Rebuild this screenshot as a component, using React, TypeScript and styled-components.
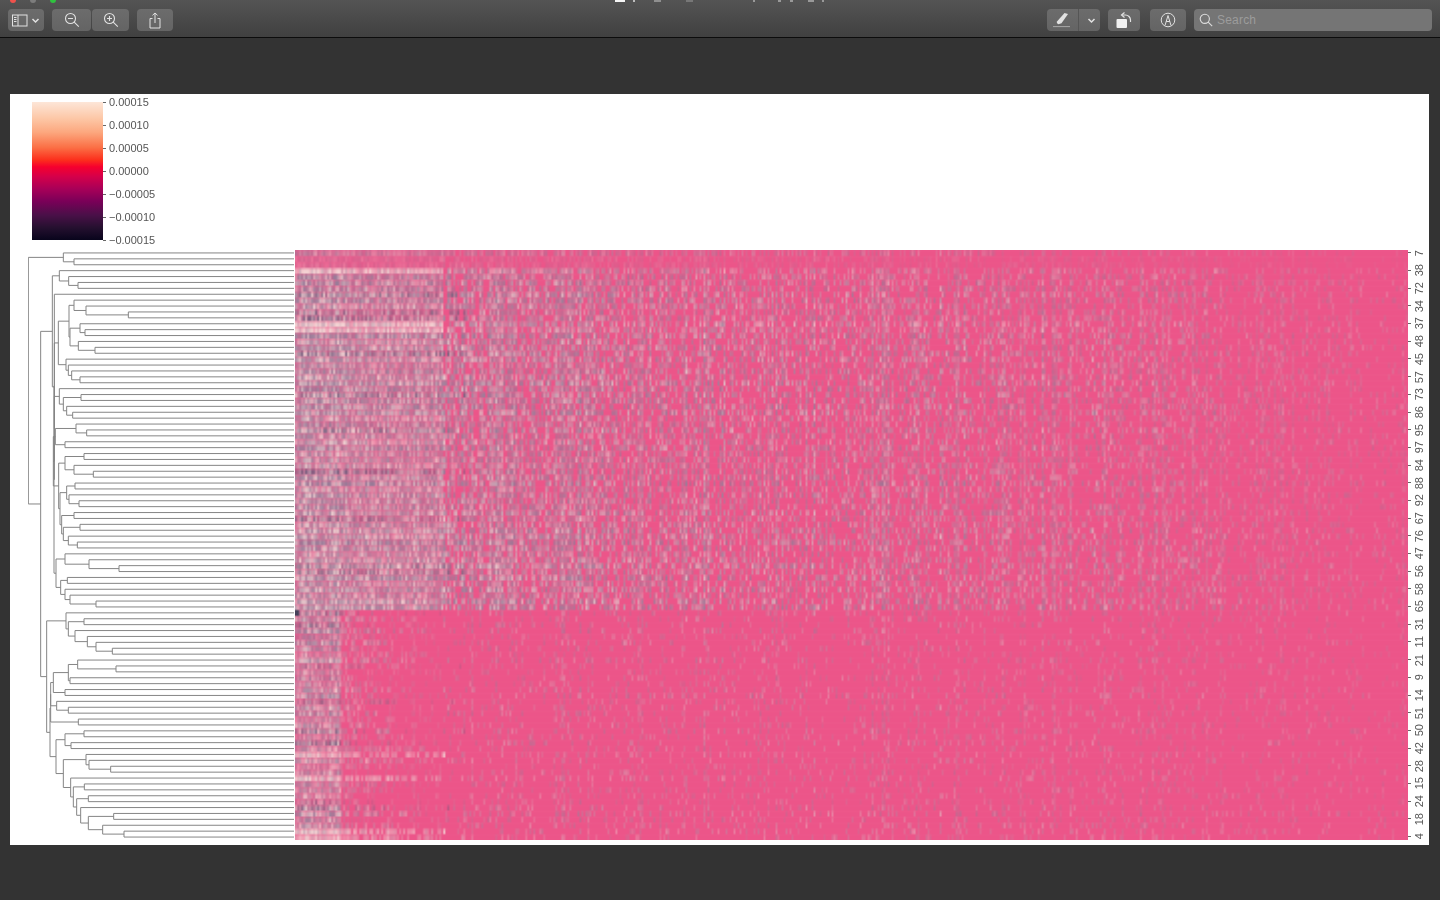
import React, { useEffect, useRef } from "react";
import styled, { createGlobalStyle } from "styled-components";

const GlobalStyle = createGlobalStyle`
  html, body {
    margin: 0;
    height: 100%;
    background: #333333;
    font-family: "Liberation Sans", Arial, sans-serif;
    overflow: hidden;
  }
`;

const Window = styled.div`
  width: 1440px;
  height: 900px;
  background: #333333;
`;

const TitleBar = styled.header`
  height: 37px;
  box-sizing: border-box;
  background: linear-gradient(#545454, #404040);
`;

const Sliver = styled.div`
  height: 3px;
  overflow: hidden;
  display: flex;
  align-items: flex-start;
`;

const Lights = styled.div`
  display: flex;
  gap: 14px;
  margin: -3px 0 0 10px;
`;

const Light = styled.span<{ $c: string }>`
  width: 6px;
  height: 6px;
  border-radius: 50%;
  background: ${(p) => p.$c};
`;

const TitleBits = styled.div`
  display: flex;
  margin-left: 559px;
`;

const TitleBit = styled.span<{ $w: number; $ml: number; $c: string }>`
  width: ${(p) => p.$w}px;
  margin-left: ${(p) => p.$ml}px;
  height: 2px;
  background: ${(p) => p.$c};
`;

const Tools = styled.div`
  display: flex;
  align-items: center;
  padding: 6px 8px 0;
  height: 22px;
`;

const Btn = styled.div<{ $w: number; $ml?: number }>`
  width: ${(p) => p.$w}px;
  height: 22px;
  margin-left: ${(p) => p.$ml ?? 0}px;
  flex: none;
  box-sizing: border-box;
  border-radius: 4px;
  background: linear-gradient(#6c6c6c, #646464);
  display: flex;
  align-items: center;
  justify-content: center;
  gap: 3px;
  color: #e2e2e2;
`;

const Divider = styled.span`
  width: 1px;
  height: 22px;
  background: #555555;
  margin: 0 5px 0 5px;
`;

const Search = styled.div`
  width: 238px;
  height: 22px;
  margin-left: 8px;
  flex: none;
  box-sizing: border-box;
  border-radius: 4px;
  background: #757575;
  display: flex;
  align-items: center;
  gap: 4px;
  padding-left: 5px;
  color: #9c9c9c;
  font-size: 12px;
  letter-spacing: 0.2px;
`;

const Rule = styled.div`
  height: 1px;
  background: #0c0c0c;
`;

const Panel = styled.main`
  width: 1419px;
  height: 751px;
  margin: 56px 0 0 10px;
  background: #ffffff;
`;

const LegendRow = styled.section`
  height: 156px;
  box-sizing: border-box;
  padding: 8px 0 0 22px;
  display: flex;
  filter: blur(0.35px);
`;

const ColorBar = styled.div`
  width: 71px;
  height: 138px;
  background: linear-gradient(
    #fde6d8 0%,
    #fdc7a6 12%,
    #fca77e 22%,
    #fb6f45 33%,
    #fc2f1c 42%,
    #f6002e 47%,
    #d5004a 54%,
    #a80058 63%,
    #7a0058 72%,
    #4a1048 82%,
    #25102f 91%,
    #08041c 100%
  );
`;

const Scale = styled.div`
  height: 138px;
  display: flex;
  flex-direction: column;
  justify-content: space-between;
`;

const ScaleItem = styled.div`
  height: 0;
  display: flex;
  align-items: center;
  gap: 3px;
  color: #555555;
  font-size: 11px;
  white-space: nowrap;
`;

const Tick = styled.span`
  width: 3px;
  height: 1px;
  background: #666666;
  flex: none;
`;

const HeatRow = styled.section`
  height: 590px;
  display: flex;
  padding-left: 18px;
`;

const Tree = styled.svg`
  width: 267px;
  height: 590px;
  flex: none;
  filter: blur(0.4px);
`;

const Heat = styled.canvas`
  width: 1113px;
  height: 590px;
  flex: none;
  filter: blur(0.6px);
`;

const Axis = styled.div`
  width: 21px;
  height: 590px;
  flex: none;
  display: flex;
  flex-direction: column;
  margin-top: -6px;
  filter: blur(0.35px);
`;

const AxisItem = styled.div`
  height: 17.7px;
  flex: none;
  display: flex;
  align-items: center;
  gap: 2px;
  color: #555555;
  font-size: 11px;
`;

const AxisLabel = styled.span`
  writing-mode: vertical-rl;
  transform: rotate(180deg);
  line-height: 12px;
`;

type TreeNode = number | { x: number; a: TreeNode; b: TreeNode };

// x is read off the 3x crops: real x = 20 + z / 3
const n = (z: number, a: TreeNode, b: TreeNode): TreeNode => ({ x: 20 + z / 3, a, b });

const U = n(
  115,
  n(
    147,
    n(162, 8, n(198, 9, n(325, 10, 11))),
    n(150, n(180, 12, n(195, 13, 14)), n(175, 15, n(225, 16, 17)))
  ),
  n(138, 18, n(145, 19, n(155, 20, n(180, 21, 22))))
);
const S1 = n(118, 23, n(130, n(183, 24, 25), n(140, 26, n(158, 27, 28))));
const S2 = n(106, n(168, 29, n(200, 30, 31)), n(135, 32, 33));
const S3 = n(135, n(192, 34, 35), n(162, 36, n(220, 37, 38)));
const S4 = n(140, n(165, 39, 40), n(147, 41, n(177, 42, 43)));
const S5 = n(125, n(162, 44, 45), n(130, n(180, 46, 47), n(145, 48, n(172, 49, 50))));
const S6 = n(135, 51, n(207, 52, n(297, 53, 54)));
const S7 = n(122, n(142, 55, 56), n(135, 57, n(150, 58, n(228, 59, 60))));

const Top = n(
  97,
  n(118, 3, n(146, 4, n(174, 5, 6))),
  n(
    103,
    7,
    n(
      102,
      n(103, U, n(103, S1, n(100, S2, n(116, S3, n(120, S4, S5))))),
      n(108, S6, S7)
    )
  )
);

const B1 = n(138, 61, n(145, n(192, 62, 63), n(165, 64, n(202, 65, n(228, 66, n(277, 67, 68))))));
const C1 = n(145, n(173, 69, n(288, 70, 71)), n(150, 72, 73));
const C2 = n(100, C1, n(135, 74, 75));
const C3 = n(110, 76, n(145, 77, 78));
const D1 = n(135, n(192, 81, 82), n(153, 83, 84));
const E = n(
  130,
  n(198, 85, n(207, 86, n(272, 87, 88))),
  n(
    152,
    89,
    n(160, n(193, 90, 91), n(170, n(205, 92, 93), n(182, 94, n(205, n(281, 95, 96), n(248, 97, n(312, 98, 99))))))
  )
);
const Bottom = n(80, B1, n(90, n(92, n(92, C2, C3), n(175, 79, 80)), n(108, D1, E)));

const Root = n(25, n(130, 0, n(162, 1, 2)), n(62, Top, Bottom));

const LEAF_X = 294;
const rowY = (i: number) => 2.95 + 5.9 * i;

const buildPaths = (node: TreeNode, out: string[]): { x: number; y: number } => {
  if (typeof node === "number") return { x: LEAF_X, y: rowY(node) };
  const a = buildPaths(node.a, out);
  const b = buildPaths(node.b, out);
  out.push(`M${a.x - 28} ${a.y}H${node.x - 28}V${b.y}H${b.x - 28}`);
  return { x: node.x, y: (a.y + b.y) / 2 };
};

const treePaths: string[] = [];
buildPaths(Root, treePaths);

const mulberry = (seed: number) => () => {
  seed |= 0;
  seed = (seed + 0x6d2b79f5) | 0;
  let t = Math.imul(seed ^ (seed >>> 15), 1 | seed);
  t = (t + Math.imul(t ^ (t >>> 7), 61 | t)) ^ t;
  return ((t ^ (t >>> 14)) >>> 0) / 4294967296;
};

const BASE = [236, 85, 137];
const PALE = [244, 226, 220];
const GRAY = [140, 125, 152];
const DARK = [95, 85, 118];

const mix = (a: number[], b: number[], t: number) => a.map((v, i) => Math.round(v + (b[i] - v) * t));

const ROWS = 100;
const COLS = 556;
const PALE_ROWS = [3, 12, 13, 85, 89, 98, 99];
const DARK_ROWS = [7, 10, 11, 17, 24, 30, 37, 45, 53, 54, 61, 63, 70, 76, 81, 83, 93, 94];

// how far a cell strays from the base pink; reach is where a lower row goes quiet
const envelope = (px: number, lower: boolean, reach: number) => {
  const bump = px > 560 && px < 920 ? 0.04 : 0;
  if (lower) {
    if (px < 45) return 0.74;
    if (px < reach) return 0.5 - (px / reach) * 0.12;
    return 0.22 - (px / 1113) * 0.12 + bump * 0.5;
  }
  if (px < 50) return 0.9;
  if (px < 148) return 0.76;
  if (px < 320) return 0.62 - ((px - 148) / 172) * 0.18;
  return 0.44 - ((px - 320) / 793) * 0.32 + bump;
};

const paintHeat = (ctx: CanvasRenderingContext2D) => {
  const rnd = mulberry(1907);
  const colW = Array.from({ length: COLS }, () => {
    const r = rnd();
    return r > 0.96 ? 1.35 : r > 0.75 ? 1.1 : 0.8 + r * 0.3;
  });
  // columns that keep firing, so the right side reads as vertical streaks
  const colP = Array.from({ length: COLS }, () => {
    const r = rnd();
    return r > 0.9 ? 2.6 : r > 0.6 ? 1.1 : 0.5;
  });
  const rowW = Array.from({ length: ROWS }, (_, i) => {
    const r = rnd();
    if (i === 1 || i === 2) return 0.3;
    if (i === 0) return 0.6;
    if (i >= 61) return 0.7 + r * 0.45;
    return 0.85 + r * 0.3;
  });
  const rowPale = Array.from({ length: ROWS }, (_, i) =>
    PALE_ROWS.includes(i) ? 0.6 : rnd() * 0.22
  );
  const rowReach = Array.from({ length: ROWS }, (_, i) =>
    PALE_ROWS.includes(i) ? 150 : 50 + rnd() * 90
  );
  const cw = ctx.canvas.width / COLS;
  const rh = ctx.canvas.height / ROWS;
  for (let i = 0; i < ROWS; i++) {
    const lower = i >= 61;
    const dark = DARK_ROWS.includes(i);
    ctx.fillStyle = `rgb(${mix(BASE, PALE, 0.06 + rnd() * 0.05).join(",")})`;
    ctx.fillRect(0, i * rh, ctx.canvas.width, rh);
    for (let c = 0; c < COLS; c++) {
      const px = (c / COLS) * 1113;
      const env = envelope(px, lower, rowReach[i]);
      let rate = 1;
      if (lower && px >= rowReach[i]) rate = env * 1.3 * colP[c];
      else if (lower && px >= 45) rate = 1 - (px / rowReach[i]) * 0.6;
      else if (!lower && px >= 148) rate = Math.max(env * 1.7 * colP[c], px < 320 ? 0.6 : 0);
      if (rnd() > rate) {
        ctx.fillStyle = `rgb(${BASE.join(",")})`;
        ctx.fillRect(c * cw, i * rh + rh * 0.12, cw + 0.2, rh * 0.88);
        continue;
      }
      const boost = PALE_ROWS.includes(i) && px < 150 ? 1.2 : 1;
      const spare = px > 148 ? 0.15 : 0;
      const t = Math.min(0.88, (env + spare) * colW[c] * rowW[i] * boost * (0.62 + rnd() * 0.55));
      const u = Math.min(1, Math.pow(rnd(), 1.5) * 0.8 + rowPale[i] * (px < 150 ? 1 : 0.3));
      const cool = dark && px < 170 && rnd() < 0.6 ? DARK : GRAY;
      ctx.fillStyle = `rgb(${mix(BASE, mix(cool, PALE, u), t).join(",")})`;
      ctx.fillRect(c * cw, i * rh + rh * 0.12, cw + 0.2, rh * 0.88);
    }
  }
  // outlier cell at the start of the lower cluster
  ctx.fillStyle = "rgb(70, 65, 90)";
  ctx.fillRect(0, 61 * rh, cw * 2, rh);
};

const LABELS = [7, 38, 72, 34, 37, 48, 45, 57, 73, 86, 95, 97, 84, 88, 92, 67, 76, 47, 56, 58, 65, 31, 11, 21, 9, 14, 51, 50, 42, 28, 15, 24, 18, 4];
const SCALE = ["0.00015", "0.00010", "0.00005", "0.00000", "\u22120.00005", "\u22120.00010", "\u22120.00015"];

const Chevron = () => (
  <svg width="9" height="9" viewBox="0 0 9 9" fill="none" stroke="currentColor" strokeWidth="1.5">
    <path d="M1.5 3l3 3 3-3" />
  </svg>
);

const SidebarIcon = () => (
  <svg width="16" height="13" viewBox="0 0 16 13" fill="none" stroke="currentColor" strokeWidth="1">
    <rect x="0.5" y="1" width="14.5" height="11" />
    <path d="M6 1v11M2 3.5h2.5M2 5.5h2.5M2 7.5h2.5" />
  </svg>
);

const LensIcon = ({ kind }: { kind: "in" | "out" }) => (
  <svg width="16" height="16" viewBox="0 0 16 16" fill="none" stroke="currentColor" strokeWidth="1.1">
    <circle cx="6.5" cy="6.5" r="5" />
    <path d="M10.2 10.2l4.6 4.4M4 6.5h5" />
    {kind === "in" && <path d="M6.5 4v5" />}
  </svg>
);

const ShareIcon = () => (
  <svg width="12" height="17" viewBox="0 0 12 17" fill="none" stroke="currentColor" strokeWidth="1">
    <path d="M3.5 6.5H1v9.5h10V6.5H8.5M6 11V1M3.5 3.3L6 1l2.5 2.3" />
  </svg>
);

const PenIcon = () => (
  <svg width="18" height="16" viewBox="0 0 18 16" fill="currentColor">
    <path d="M5 9.5L12.5 1l3.5 1-6.5 9.3-3.2 1-1.5-1.2z" />
    <path d="M1 14.6h17" stroke="#a8a8a8" strokeWidth="1" />
  </svg>
);

const RotateIcon = () => (
  <svg width="16" height="17" viewBox="0 0 16 17" fill="none">
    <rect x="0.5" y="7" width="10.5" height="9" rx="1" fill="#f0f0f0" />
    <path d="M6 3h3.5a5 5 0 0 1 5 5v2" stroke="#e2e2e2" strokeWidth="1.2" />
    <path d="M8.5 0.5L5.5 3l3 2.5" stroke="#e2e2e2" strokeWidth="1.2" />
  </svg>
);

const MarkupIcon = () => (
  <svg width="16" height="16" viewBox="0 0 16 16" fill="none" stroke="currentColor" strokeWidth="1">
    <circle cx="8" cy="8" r="6.8" />
    <path d="M5 13.5L8 3.5l3 10M6.2 9.5h3.6" />
  </svg>
);

const SearchIcon = () => (
  <svg width="14" height="14" viewBox="0 0 14 14" fill="none" stroke="#dddddd" strokeWidth="1.1">
    <circle cx="5.8" cy="5.8" r="4.6" />
    <path d="M9.2 9.2l4 4" />
  </svg>
);

const HeatMap = () => {
  const ref = useRef<HTMLCanvasElement>(null);
  useEffect(() => {
    const ctx = ref.current?.getContext("2d");
    if (ctx) paintHeat(ctx);
  }, []);
  return <Heat ref={ref} width={COLS} height={300} />;
};

export default function App() {
  return (
    <Window>
      <GlobalStyle />
      <TitleBar>
        <Sliver>
          <Lights>
            <Light $c="#f0524c" />
            <Light $c="#7d7d7d" />
            <Light $c="#2fc23f" />
          </Lights>
          <TitleBits>
            <TitleBit $w={10} $ml={0} $c="#f5f5f5" />
            <TitleBit $w={2} $ml={8} $c="#bdbdbd" />
            <TitleBit $w={7} $ml={19} $c="#8f8f8f" />
            <TitleBit $w={7} $ml={25} $c="#777777" />
            <TitleBit $w={2} $ml={60} $c="#999999" />
            <TitleBit $w={3} $ml={23} $c="#999999" />
            <TitleBit $w={3} $ml={9} $c="#999999" />
            <TitleBit $w={6} $ml={15} $c="#999999" />
            <TitleBit $w={2} $ml={8} $c="#999999" />
          </TitleBits>
        </Sliver>
        <Tools>
          <Btn $w={36}>
            <SidebarIcon />
            <Chevron />
          </Btn>
          <Btn $w={39} $ml={8}>
            <LensIcon kind="out" />
          </Btn>
          <Btn $w={37} $ml={1}>
            <LensIcon kind="in" />
          </Btn>
          <Btn $w={36} $ml={8}>
            <ShareIcon />
          </Btn>
          <Btn $w={53} $ml={874}>
            <PenIcon />
            <Divider />
            <Chevron />
          </Btn>
          <Btn $w={32} $ml={8}>
            <RotateIcon />
          </Btn>
          <Btn $w={36} $ml={10}>
            <MarkupIcon />
          </Btn>
          <Search>
            <SearchIcon />
            Search
          </Search>
        </Tools>
      </TitleBar>
      <Rule />
      <Panel>
        <LegendRow>
          <ColorBar />
          <Scale>
            {SCALE.map((s) => (
              <ScaleItem key={s}>
                <Tick />
                {s}
              </ScaleItem>
            ))}
          </Scale>
        </LegendRow>
        <HeatRow>
          <Tree viewBox="0 0 267 590" fill="none" stroke="#858585" strokeWidth="1">
            {treePaths.map((d) => (
              <path key={d} d={d} />
            ))}
          </Tree>
          <HeatMap />
          <Axis>
            {LABELS.map((l) => (
              <AxisItem key={l}>
                <Tick />
                <AxisLabel>{l}</AxisLabel>
              </AxisItem>
            ))}
          </Axis>
        </HeatRow>
      </Panel>
    </Window>
  );
}
